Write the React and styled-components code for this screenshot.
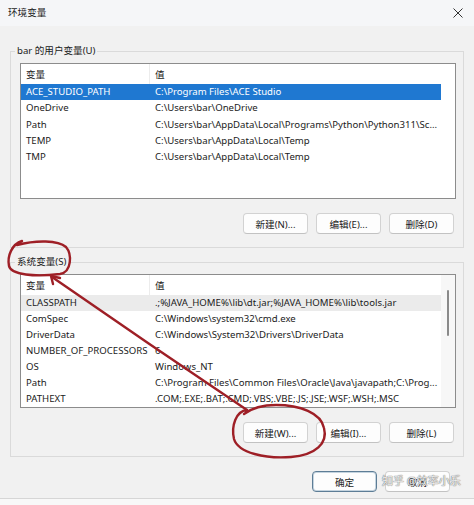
import React from 'react'
import styled, { createGlobalStyle } from 'styled-components'

const GlobalStyle = createGlobalStyle`
  body {
    margin: 0;
    background: #f8f8f8;
    font-family: "Noto Sans", "Noto Sans CJK SC", sans-serif;
    font-size: 9.6px;
    color: #1b1b1b;
  }
`

const Window = styled.div`
  position: relative;
  width: 474px;
  height: 499px;
  box-sizing: border-box;
  background: #f1f1f1;
  border-bottom: 1px solid #d6d6d6;
  display: flex;
  flex-direction: column;
`

const TitleBar = styled.div`
  height: 26px;
  display: flex;
  align-items: center;
  justify-content: space-between;
  padding: 0 8px;
  background: #f5f6f8;
`

const Title = styled.span`
  font-size: 9.6px;
  line-height: 16px;
`

const Content = styled.div`
  padding: 0 10px;
  display: flex;
  flex-direction: column;
  gap: 6px;
  margin-top: 17px;
`

const Group = styled.fieldset`
  margin: 0;
  padding: 0 7px 13px 9px;
  border: 1px solid #dadada;
  min-width: 0;
`

const Legend = styled.legend`
  margin-left: -5px;
  padding: 0 2px;
  font-size: 9.6px;
  line-height: 16px;
`

const ListBox = styled.div`
  margin-top: 4px;
  height: ${p => p.h}px;
  box-sizing: border-box;
  border: 1px solid #8c8c8c;
  background: #fff;
  display: flex;
  overflow: hidden;
`

const Table = styled.div`
  flex: 1;
  display: flex;
  flex-direction: column;
  min-width: 0;
`

const HeaderRow = styled.div`
  height: 20px;
  display: grid;
  grid-template-columns: 129px 1fr;
  align-items: stretch;
`

const HeaderCell = styled.div`
  display: flex;
  align-items: center;
  padding-left: 5px;
  border-right: 1px solid ${p => (p.last ? 'transparent' : '#ececec')};
`

const Row = styled.div`
  height: ${p => p.rh}px;
  display: grid;
  grid-template-columns: 129px 1fr;
  align-items: center;
  background: ${p => (p.selected ? '#1f78d1' : p.hover ? '#ebebeb' : 'transparent')};
  color: ${p => (p.selected ? '#fff' : '#1b1b1b')};
`

const Cell = styled.div`
  padding-left: 5px;
  white-space: nowrap;
  overflow: hidden;
  line-height: 16px;
`

const ScrollTrack = styled.div`
  width: 14px;
  background: ${p => (p.bar ? '#f7f7f7' : '#fff')};
  display: flex;
  justify-content: center;
`

const Thumb = styled.div`
  margin-top: 15px;
  width: 2px;
  height: 46px;
  border-radius: 1px;
  background: #8a8a8a;
`

const ButtonRow = styled.div`
  margin-top: 14px;
  display: flex;
  justify-content: flex-end;
  gap: 8px;
  padding-right: 2px;
`

const Button = styled.button`
  width: 65px;
  height: 21px;
  box-sizing: border-box;
  padding: 0;
  border: 1px solid ${p => (p.primary ? '#5d7d96' : '#d2d2d2')};
  border-bottom-color: ${p => (p.primary ? '#5d7d96' : '#c2c2c2')};
  box-shadow: ${p => (p.primary ? 'inset 0 0 0 1px #c5d4df' : 'none')};
  border-radius: 4px;
  background: #fdfdfd;
  font-family: "Noto Sans", "Noto Sans CJK SC", sans-serif;
  font-size: 9.6px;
  color: #1b1b1b;
`

const Footer = styled.div`
  margin-top: 14px;
  display: flex;
  justify-content: flex-end;
  gap: 8px;
  padding-right: 24px;
`

const Watermark = styled.span`
  position: absolute;
  left: 382px;
  top: 473px;
  font-size: 11px;
  line-height: 16px;
  white-space: nowrap;
  color: rgba(255, 255, 255, 0.9);
  text-shadow: 0 0 1px #666, 0 0 1px #666;
  pointer-events: none;
`

const Marks = styled.svg`
  position: absolute;
  left: 0;
  top: 0;
  pointer-events: none;
`

const userVars = [
  ['ACE_STUDIO_PATH', 'C:\\Program Files\\ACE Studio'],
  ['OneDrive', 'C:\\Users\\bar\\OneDrive'],
  ['Path', 'C:\\Users\\bar\\AppData\\Local\\Programs\\Python\\Python311\\Sc...'],
  ['TEMP', 'C:\\Users\\bar\\AppData\\Local\\Temp'],
  ['TMP', 'C:\\Users\\bar\\AppData\\Local\\Temp'],
]

const sysVars = [
  ['CLASSPATH', '.;%JAVA_HOME%\\lib\\dt.jar;%JAVA_HOME%\\lib\\tools.jar'],
  ['ComSpec', 'C:\\Windows\\system32\\cmd.exe'],
  ['DriverData', 'C:\\Windows\\System32\\Drivers\\DriverData'],
  ['NUMBER_OF_PROCESSORS', '6'],
  ['OS', 'Windows_NT'],
  ['Path', 'C:\\Program Files\\Common Files\\Oracle\\Java\\javapath;C:\\Prog...'],
  ['PATHEXT', '.COM;.EXE;.BAT;.CMD;.VBS;.VBE;.JS;.JSE;.WSF;.WSH;.MSC'],
]

function VarList({ rows, h, rh, selected, hover, bar }) {
  return (
    <ListBox h={h}>
      <Table>
        <HeaderRow>
          <HeaderCell>变量</HeaderCell>
          <HeaderCell last>值</HeaderCell>
        </HeaderRow>
        {rows.map(([k, v], i) => (
          <Row key={k + i} rh={rh} selected={i === selected} hover={i === hover}>
            <Cell>{k}</Cell>
            <Cell>{v}</Cell>
          </Row>
        ))}
      </Table>
      <ScrollTrack bar={bar}>{bar && <Thumb />}</ScrollTrack>
    </ListBox>
  )
}

export default function App() {
  return (
    <>
      <GlobalStyle />
      <Window>
        <TitleBar>
          <Title>环境变量</Title>
          <svg width="10" height="10" viewBox="0 0 10 10" style={{ marginRight: 3 }}>
            <path d="M0.5 0.5 L9.5 9.5 M9.5 0.5 L0.5 9.5" stroke="#333" strokeWidth="1" />
          </svg>
        </TitleBar>
        <Content>
          <Group>
            <Legend>bar 的用户变量(U)</Legend>
            <VarList rows={userVars} h={136} rh={16.25} selected={0} />
            <ButtonRow>
              <Button>新建(N)...</Button>
              <Button>编辑(E)...</Button>
              <Button>删除(D)</Button>
            </ButtonRow>
          </Group>
          <Group>
            <Legend>系统变量(S)</Legend>
            <VarList rows={sysVars} h={134} rh={16} hover={0} bar />
            <ButtonRow>
              <Button>新建(W)...</Button>
              <Button>编辑(I)...</Button>
              <Button>删除(L)</Button>
            </ButtonRow>
          </Group>
        </Content>
        <Footer>
          <Button primary>确定</Button>
          <Button>取消</Button>
        </Footer>
        <Watermark>知乎 @效率小乐</Watermark>
        <Marks width="474" height="505" viewBox="0 0 474 505">
          <g fill="none" stroke="#9e1f26" strokeWidth="2.4" strokeLinecap="round" strokeLinejoin="round">
            <path d="M22 241 C12 244 7 256 9 266 C11 275 35 277 60 274 C72 272 72 254 66 247 C58 240 36 240 17 245" />
            <path d="M51 276 L60 278 M51 276 L53 284" />
            <path d="M52 277 Q150 345 247 410" />
            <path d="M247 410 C236 411 231 426 234 439 C238 453 266 459 291 457 C316 455 328 443 324 428 C321 413 300 405 276 405 C262 405 252 408 244 414" />
          </g>
        </Marks>
      </Window>
    </>
  )
}
